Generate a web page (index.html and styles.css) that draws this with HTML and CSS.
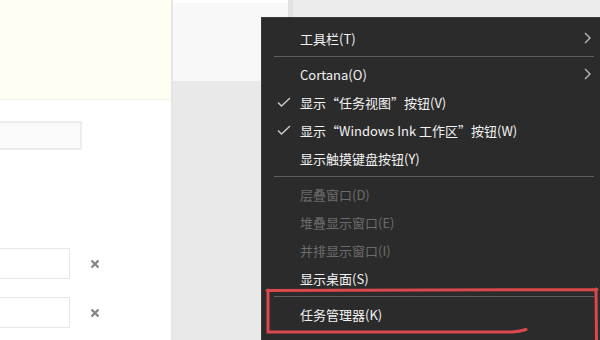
FILE: index.html
```html
<!DOCTYPE html>
<html lang="zh-CN">
<head>
<meta charset="utf-8">
<title>任务栏菜单</title>
<link rel="stylesheet" href="styles.css">
</head>
<body>
<div class="page">
  <section class="left">
    <div class="notice"></div>
    <div class="field wide"></div>
    <div class="rows">
      <div class="row">
        <div class="field"></div>
        <svg class="x" viewBox="0 0 10 10" width="10" height="10"><path d="M1.5 1.5 L8.5 8.5 M8.5 1.5 L1.5 8.5"/></svg>
      </div>
      <div class="row">
        <div class="field"></div>
        <svg class="x" viewBox="0 0 10 10" width="10" height="10"><path d="M1.5 1.5 L8.5 8.5 M8.5 1.5 L1.5 8.5"/></svg>
      </div>
    </div>
  </section>
  <section class="mid">
    <div class="mid-top"></div>
    <div class="mid-bottom"></div>
  </section>
  <section class="right"></section>
</div>

<div class="menu">
  <div class="item"><span class="label">工具栏(T)</span><svg class="arrow" viewBox="0 0 7 12" width="7" height="12"><path d="M1 1 L6 6 L1 11"/></svg></div>
  <div class="sep"></div>
  <div class="item"><span class="label">Cortana(O)</span><svg class="arrow" viewBox="0 0 7 12" width="7" height="12"><path d="M1 1 L6 6 L1 11"/></svg></div>
  <div class="item"><svg class="check" viewBox="0 0 14 10" width="14" height="10"><path d="M1 5.5 L4.5 9 L13 1"/></svg><span class="label">显示“任务视图”按钮(V)</span></div>
  <div class="item"><svg class="check" viewBox="0 0 14 10" width="14" height="10"><path d="M1 5.5 L4.5 9 L13 1"/></svg><span class="label">显示“Windows Ink 工作区”按钮(W)</span></div>
  <div class="item"><span class="label">显示触摸键盘按钮(Y)</span></div>
  <div class="sep"></div>
  <div class="item disabled"><span class="label">层叠窗口(D)</span></div>
  <div class="item disabled"><span class="label">堆叠显示窗口(E)</span></div>
  <div class="item disabled"><span class="label">并排显示窗口(I)</span></div>
  <div class="item"><span class="label">显示桌面(S)</span></div>
  <div class="sep"></div>
  <div class="item"><span class="label">任务管理器(K)</span></div>
</div>

<svg class="mark" viewBox="0 0 600 340" width="600" height="340">
  <path d="M267 290.5 L597 289.5 M596 289 L596.5 340 M268 290 L268 332 L512 332 Q520 331.5 526 329.5"/>
</svg>
</body>
</html>
```

FILE: styles.css
```css
html, body {
  margin: 0;
  padding: 0;
}

body {
  width: 600px;
  height: 340px;
  overflow: hidden;
  position: relative;
  font-family: "Noto Sans CJK SC", "Noto Sans", sans-serif;
  background: #ffffff;
}

.page {
  display: flex;
  height: 340px;
}

.left {
  width: 171px;
  flex: none;
  border-right: 2px solid #e6e6e6;
  background: #ffffff;
  display: flex;
  flex-direction: column;
}

.notice {
  height: 100px;
  background: #fffef3;
  border-bottom: 1px solid #f4f3e6;
  box-sizing: border-box;
}

.field {
  box-sizing: border-box;
  border: 2px solid #ececec;
  background: #fcfcfc;
  height: 30px;
  width: 72px;
  margin-left: -2px;
}

.field.wide {
  margin-top: 21px;
  height: 29px;
  width: 84px;
  background: #fafafa;
}

.rows {
  margin-top: 98px;
  display: flex;
  flex-direction: column;
  gap: 18px;
}

.row {
  display: flex;
  align-items: center;
  gap: 20px;
}

.row .field {
  border-width: 1px;
  border-color: #e6e6e6;
  background: #ffffff;
  height: 31px;
}

.x path {
  stroke: #858585;
  stroke-width: 2.3;
  fill: none;
}

.mid {
  width: 115px;
  flex: none;
  display: flex;
  flex-direction: column;
}

.mid-top {
  height: 81px;
  box-sizing: border-box;
  border-top: 3px solid #ffffff;
  background: #f8f8f9;
}

.mid-bottom {
  flex: 1;
  background: #e9e9e9;
}

.right {
  flex: 1;
  background: #ececec;
  border-left: 5px solid #e2e2e2;
}

.menu {
  position: absolute;
  left: 261px;
  top: 17px;
  width: 339px;
  height: 323px;
  box-sizing: border-box;
  background: #2b2b2b;
  border-left: 1px solid #3a3a3a;
  border-top: 1px solid #3a3a3a;
  padding-top: 6px;
  display: flex;
  flex-direction: column;
  color: #f2f2f2;
  font-size: 13px;
}

.item {
  height: 28px;
  display: flex;
  align-items: center;
  position: relative;
  padding-left: 38px;
}

.item.disabled {
  color: #6c6c6c;
}

.check {
  position: absolute;
  left: 15px;
  top: 9px;
}

.check path {
  stroke: #cfcfcf;
  stroke-width: 1.3;
  fill: none;
}

.arrow {
  position: absolute;
  right: 9px;
  top: 8px;
}

.arrow path {
  stroke: #b8b8b8;
  stroke-width: 1.4;
  fill: none;
}

.sep {
  height: 1px;
  background: #5e5e5e;
  margin: 4px 6px 3px 12px;
}

.mark {
  position: absolute;
  left: 0;
  top: 0;
  pointer-events: none;
}

.mark path {
  stroke: #d9494b;
  stroke-width: 3;
  fill: none;
  stroke-linecap: round;
}
```
